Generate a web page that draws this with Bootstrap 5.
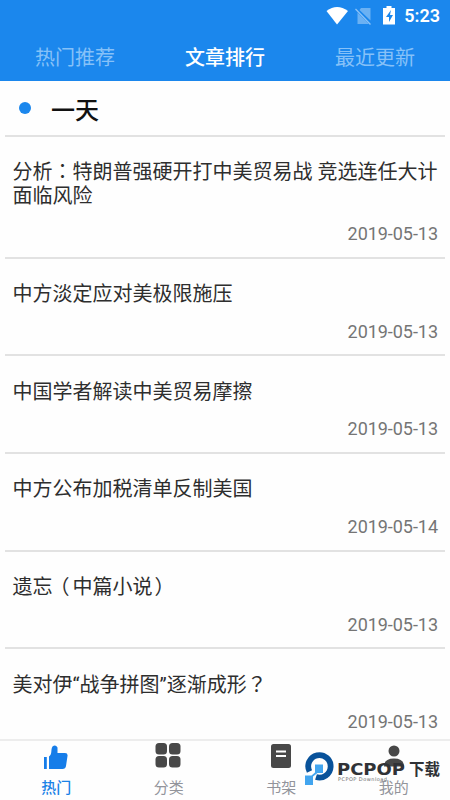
<!DOCTYPE html>
<html lang="zh-CN">
<head>
<meta charset="utf-8">
<meta name="viewport" content="width=device-width, initial-scale=1">
<title>文章排行</title>
<link rel="stylesheet" href="https://cdn.jsdelivr.net/npm/bootstrap@5.3.0/dist/css/bootstrap.min.css">
<style>
  body { font-family: Roboto, "Noto Sans CJK SC", sans-serif; height: 800px; background: #fefefe; }
  .app-head { background: #1b87ed; height: 81px; }
  .status-row { height: 32px; padding-right: 10px; font-size: 18px; line-height: 32px; }
  .top-tab { font-size: 20px; line-height: 49px; padding-top: 2px; color: #86c1f8; }
  .top-tab.active { color: #fff; font-weight: 500; }
  .day-row { height: 54px; padding-left: 19px; gap: 20px; }
  .day-dot { width: 12px; height: 12px; background: #1b87ed; }
  .day-name { font-size: 24px; line-height: 50px; padding-top: 6px; color: #111; }
  .feed { padding: 0 5px; }
  .entry { border-top: 2px solid #e2e2e2; padding: 23.3px 7px 10.8px 7.5px; }
  .entry-title { font-size: 20px; line-height: 24px; color: #2e2e2e; white-space: nowrap; }
  .entry-title .tc { font-family: "Noto Sans CJK TC", sans-serif; line-height: 0; }
  .paren-open { margin: 0 3px 0 -3px; }
  .paren-close { margin-left: 2px; }
  .entry-date { font-size: 18px; line-height: 24px; margin-top: 13.6px; color: #757575; letter-spacing: -.05px; }
  .bottom-bar { height: 61px; border-top: 2px solid #ededed; background: #fefefe; }
  .bottom-tab { font-size: 15px; line-height: 22px; color: #92949b; padding-top: 1px; }
  .bottom-tab svg { height: 32px; width: 32px; margin-bottom: 3px; }
  .bottom-tab.active { color: #1b82e6; font-weight: 500; }
  .brand { left: 300px; bottom: 0; z-index: 2; }
</style>
<script src="https://cdn.jsdelivr.net/npm/bootstrap@5.3.0/dist/js/bootstrap.bundle.min.js"></script>
</head>
<body class="d-flex flex-column overflow-hidden position-relative">
<header class="app-head flex-shrink-0 text-white">
  <div class="status-row d-flex justify-content-end align-items-center fw-semibold">
    <svg width="83" height="24" viewBox="0 0 83 24" fill="#fff">
      <path d="M9.500 7Q20 -1 31 7L20 20.500Z"/>
      <path d="M44 4H53.500V16.500L42.500 6ZM40.500 8.500L52 20H40.500Z" fill="#6bb1f3"/>
      <path d="M38.500 5L53.500 20.500" stroke="#8cc3f7" stroke-width="1.300"/>
      <path d="M66 4h3.500V2h5v2h3.500v16.500H66Z"/>
      <path d="M74 6l-5 7h3v5l4-7h-3Z" fill="#1b87ed"/>
    </svg>
    <span class="ms-1">5:23</span>
  </div>
  <nav class="row g-0 text-center">
    <a class="col top-tab text-decoration-none" href="#">热门推荐</a>
    <a class="col top-tab active text-decoration-none" href="#">文章排行</a>
    <a class="col top-tab text-decoration-none" href="#">最近更新</a>
  </nav>
</header>
<main class="flex-grow-1 overflow-hidden">
  <div class="day-row d-flex align-items-center">
    <span class="day-dot rounded-circle"></span>
    <span class="day-name fw-medium">一天</span>
  </div>
  <div class="feed">
    <article class="entry"><div class="entry-title">分析<span class="tc" lang="zh-TW">：</span>特朗普强硬开打中美贸易战 竞选连任大计<br>面临风险</div><div class="entry-date text-end">2019-05-13</div></article>
    <article class="entry"><div class="entry-title">中方淡定应对美极限施压</div><div class="entry-date text-end">2019-05-13</div></article>
    <article class="entry"><div class="entry-title">中国学者解读中美贸易摩擦</div><div class="entry-date text-end">2019-05-13</div></article>
    <article class="entry"><div class="entry-title">中方公布加税清单反制美国</div><div class="entry-date text-end">2019-05-14</div></article>
    <article class="entry"><div class="entry-title">遗忘<span class="tc paren-open" lang="zh-TW">（</span>中篇小说<span class="tc paren-close" lang="zh-TW">）</span></div><div class="entry-date text-end">2019-05-13</div></article>
    <article class="entry"><div class="entry-title">美对伊“战争拼图”逐渐成形<span class="tc" lang="zh-TW">？</span></div><div class="entry-date text-end">2019-05-13</div></article>
  </div>
</main>
<nav class="bottom-bar row g-0 flex-shrink-0 text-center">
  <a class="col bottom-tab active text-decoration-none d-flex flex-column align-items-center" href="#">
    <svg viewBox="0 0 32 32" fill="#167de9"><path d="M4 15h2.800v12H4ZM9 14.500c3.500-2 1.500-7 3.500-10q3-2.500 5 1v5.500H25q3 0 2.500 3L26 24q-.5 3-3.500 3H9Z"/></svg>热门</a>
  <a class="col bottom-tab text-decoration-none d-flex flex-column align-items-center" href="#">
    <svg viewBox="0 0 32 32" fill="#484848"><rect x="2.500" y="1" width="11.500" height="11.500" rx="3.500"/><rect x="16" y="1" width="11.500" height="11.500" rx="3.500"/><rect x="2.500" y="14" width="11.500" height="11.500" rx="3.500"/><rect x="16" y="14" width="11.500" height="11.500" rx="3.500"/></svg>分类</a>
  <a class="col bottom-tab text-decoration-none d-flex flex-column align-items-center" href="#">
    <svg viewBox="0 0 32 32"><rect x="6" y="2" width="20" height="24" rx="2.500" fill="#484848"/><path d="M11 9.500h10M11 14h10" stroke="#fff" stroke-width="2"/></svg>书架</a>
  <a class="col bottom-tab text-decoration-none d-flex flex-column align-items-center" href="#">
    <svg viewBox="0 0 32 32" fill="#484848"><circle cx="16" cy="9" r="5.500"/><path d="M6 24.500q0-8 10-8t10 8Z"/></svg>我的</a>
</nav>
<svg class="brand position-absolute" width="150" height="60" viewBox="0 0 150 60">
  <path d="M9.500 31.500A11.200 11.200 0 1 1 16 37" fill="none" stroke="#08529a" stroke-width="5.800"/>
  <path d="M15 24.500h8V33h-5.500L13 36.500V45H5V35.500h6.500L15 32.500Z" fill="#42a5ef"/>
  <g fill="#303236" font-weight="700">
    <text x="37" y="35" font-size="15.500" font-family="DejaVu Sans, sans-serif" textLength="68" lengthAdjust="spacingAndGlyphs">PCPOP</text>
    <text x="109" y="34.500" font-size="16" font-family="Noto Sans CJK SC, sans-serif" textLength="31" lengthAdjust="spacingAndGlyphs">下载</text>
  </g>
  <text x="38" y="41" font-size="5" fill="#666" font-family="DejaVu Sans, sans-serif" textLength="49" lengthAdjust="spacing">PCPOP Download</text>
</svg>
</body>
</html>
